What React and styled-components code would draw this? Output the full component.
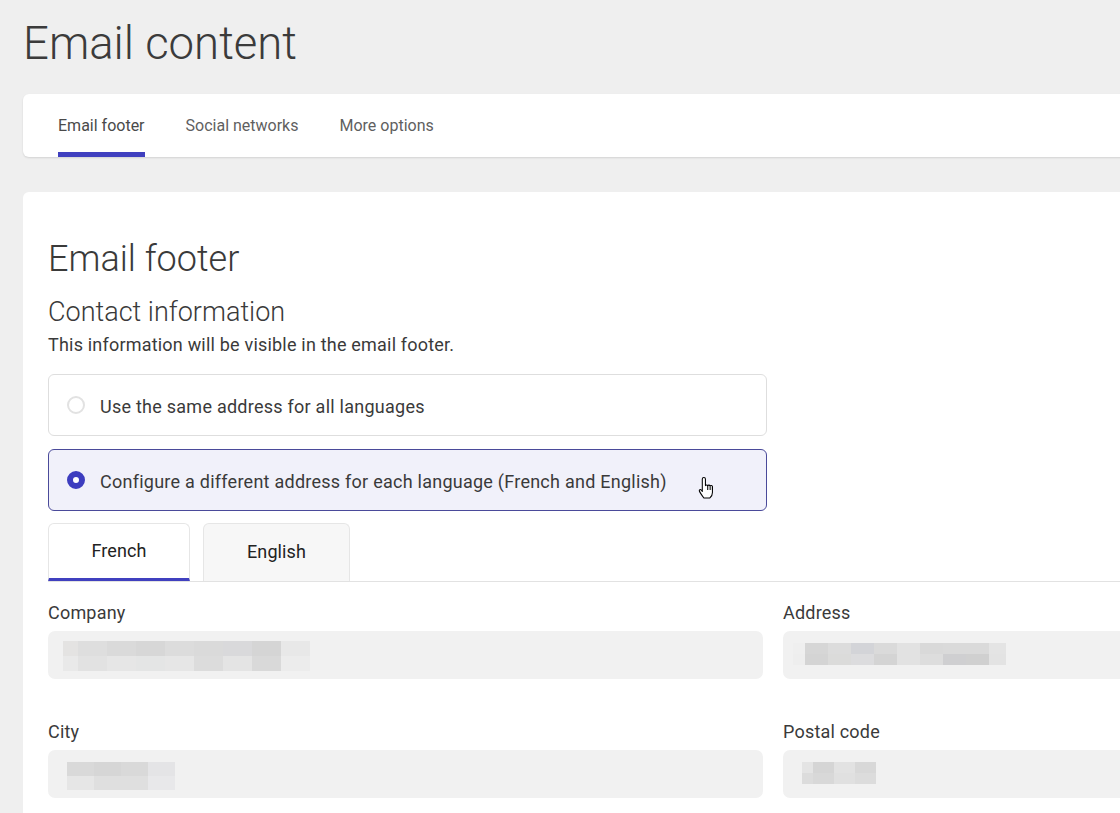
import React, { useState } from "react";
import styled, { createGlobalStyle } from "styled-components";

const GlobalStyle = createGlobalStyle`
  html, body {
    margin: 0;
    padding: 0;
    background: #efefef;
    overflow: hidden;
  }
  body {
    font-family: Roboto, "Liberation Sans", sans-serif;
    color: #333;
  }
  * {
    box-sizing: border-box;
  }
`;

const Page = styled.div`
  width: 1560px;
  padding: 21px 0 0 23px;
`;

const PageTitle = styled.h1`
  margin: 0 0 27px;
  font-size: 45.5px;
  line-height: 1;
  font-weight: 300;
  color: #3b3b3b;
`;

const TabCard = styled.div`
  height: 63px;
  background: #fff;
  border-radius: 6px;
  box-shadow: 0 1px 2px rgba(0, 0, 0, 0.12);
  padding: 0 0 0 35px;
  display: flex;
  gap: 41px;
`;

const TopTab = styled.div`
  display: flex;
  align-items: center;
  padding-top: 5px;
  font-size: 16px;
  color: ${(p) => (p.active ? "#4a4a4a" : "#5f5f5f")};
  border-bottom: 5px solid ${(p) => (p.active ? "#4040bf" : "transparent")};
  cursor: pointer;
`;

const Card = styled.div`
  margin-top: 35px;
  background: #fff;
  border-radius: 6px;
  padding: 49px 25px 40px;
  height: 700px;
`;

const SectionTitle = styled.h2`
  margin: 0 0 22px;
  font-size: 36px;
  line-height: 1;
  font-weight: 300;
  color: #3a3a3a;
`;

const SubTitle = styled.h3`
  margin: 0 0 10px;
  font-size: 27px;
  line-height: 1;
  font-weight: 300;
  color: #3a3a3a;
`;

const Hint = styled.p`
  margin: 0 0 20px;
  font-size: 18px;
  letter-spacing: 0.2px;
  line-height: 1;
  color: #3a3a3a;
`;

const Options = styled.div`
  width: 719px;
  display: flex;
  flex-direction: column;
  gap: 13px;
`;

const Option = styled.label`
  position: relative;
  height: 62px;
  display: flex;
  align-items: center;
  gap: 15px;
  padding: 0 0 0 18px;
  border: 1px solid ${(p) => (p.checked ? "#4a4a9a" : "#dedede")};
  background: ${(p) => (p.checked ? "#f1f1fa" : "#fff")};
  border-radius: 6px;
  font-size: 18px;
  letter-spacing: 0.25px;
  color: #3a3a3a;
  cursor: pointer;
`;

const OptionText = styled.span`
  padding-top: 3px;
`;

const Radio = styled.span`
  width: 18px;
  height: 18px;
  border-radius: 50%;
  border: ${(p) => (p.checked ? "6px solid #3d3dbf" : "2px solid #e2e2e2")};
  background: #fff;
  flex-shrink: 0;
`;

const Cursor = styled.svg`
  position: absolute;
  left: 649px;
  top: 26px;
  width: 18px;
  height: 23px;
`;

const LangTabs = styled.div`
  margin-top: 12px;
  display: flex;
  gap: 13px;
  border-bottom: 1px solid #e2e2e2;
`;

const LangTab = styled.div`
  width: ${(p) => p.w}px;
  height: 58px;
  display: flex;
  align-items: center;
  justify-content: center;
  font-size: 18px;
  letter-spacing: 0.1px;
  color: #222;
  background: ${(p) => (p.active ? "#fff" : "#f7f7f7")};
  border: 1px solid #e6e6e6;
  border-bottom: ${(p) => (p.active ? "3px solid #4040bf" : "none")};
  border-radius: 6px 6px 0 0;
  padding-bottom: ${(p) => (p.active ? "0" : "2px")};
  cursor: pointer;
`;

const FieldGrid = styled.div`
  margin-top: 22px;
  display: grid;
  grid-template-columns: 715px 715px;
  column-gap: 20px;
  row-gap: 44px;
`;

const Field = styled.div`
  display: flex;
  flex-direction: column;
  gap: 9px;
`;

const Label = styled.span`
  font-size: 18px;
  letter-spacing: 0.2px;
  line-height: 1;
  color: #3a3a3a;
`;

const Input = styled.div`
  height: 48px;
  background: #f1f1f1;
  border-radius: 7px;
  padding: ${(p) => p.pad};
  display: flex;
  flex-direction: column;
`;

const PixelRow = styled.div`
  display: flex;
  height: ${(p) => p.h}px;
`;

const Pixel = styled.span`
  display: block;
  width: ${(p) => p.w}px;
  height: 100%;
  background: ${(p) => p.c};
`;

const fields = [
  {
    label: "Company",
    pad: "10px 0 0 15px",
    h: 15,
    widths: [15, 29, 29, 29, 29, 29, 29, 29, 29],
    rows: [
      ["#e4e3e2", "#dedede", "#dadada", "#d7d7d7", "#dcdcdc", "#dadada", "#d9d9db", "#d5d5d5", "#e8e8e8"],
      ["#e9e9e9", "#e2e2e2", "#e6e6e6", "#e4e5e5", "#e6e6e6", "#dcdcdc", "#e4e4e4", "#d9d9d9", "#ececec"],
    ],
  },
  {
    label: "Address",
    pad: "12px 0 0 10px",
    h: 11,
    widths: [12, 23, 23, 23, 23, 23, 23, 23, 23, 17],
    rows: [
      ["#efefef", "#d6d6d6", "#dcdcdc", "#d3d4d8", "#dadada", "#e2e2e2", "#d9d9d9", "#dadada", "#dadada", "#e4e4e4"],
      ["#eeeeee", "#d4d4d4", "#dbdbda", "#dcdcde", "#d4d4d4", "#e2e2e2", "#dddddd", "#cfcfd1", "#d0d0d0", "#e3e3e3"],
    ],
  },
  {
    label: "City",
    pad: "12px 0 0 19px",
    h: 14,
    widths: [27, 27, 27, 27],
    rows: [
      ["#d9d9d9", "#d6d6d6", "#d9d9d9", "#e4e4e6"],
      ["#e6e6e6", "#dfdfdf", "#dfdfdf", "#e8e8ea"],
    ],
  },
  {
    label: "Postal code",
    pad: "12px 0 0 19px",
    h: 11,
    widths: [11, 21, 21, 21],
    rows: [
      ["#e4e4e4", "#d5d5d5", "#e2e2e2", "#d8d8d8"],
      ["#dcdcdc", "#d8d8d8", "#e0e0e0", "#dcdcdc"],
    ],
  },
];

const HandCursor = () => (
  <Cursor viewBox="0 0 17 22">
    <path
      d="M5.5 1.5c.8 0 1.5.6 1.5 1.4v6.3c.3-.7 1.8-.8 2.2.1.4-.8 1.9-.8 2.3.2.5-.7 2-.5 2.2.6v5.6c0 2.2-1.3 4.3-2.4 5.3H5.5C4.6 19.8 1.8 16 1.2 14.4c-.4-1.1.9-1.9 1.8-1l1 1.4V2.9c0-.8.7-1.4 1.5-1.4z"
      fill="#fff"
      stroke="#000"
      strokeWidth="1"
      strokeLinejoin="round"
    />
    <path d="M9.2 9.5v4M11.5 9.8v3.7M13.7 10.4v3.1" stroke="#000" strokeWidth="1" />
  </Cursor>
);

export default function App() {
  const [tab, setTab] = useState(0);
  const [mode, setMode] = useState(1);
  const [lang, setLang] = useState(0);

  return (
    <>
      <GlobalStyle />
      <Page>
        <PageTitle>Email content</PageTitle>
        <TabCard>
          {["Email footer", "Social networks", "More options"].map((t, i) => (
            <TopTab key={t} active={i === tab} onClick={() => setTab(i)}>
              {t}
            </TopTab>
          ))}
        </TabCard>

        <Card>
          <SectionTitle>Email footer</SectionTitle>
          <SubTitle>Contact information</SubTitle>
          <Hint>This information will be visible in the email footer.</Hint>

          <Options>
            <Option checked={mode === 0} onClick={() => setMode(0)}>
              <Radio checked={mode === 0} />
              <OptionText>Use the same address for all languages</OptionText>
            </Option>
            <Option checked={mode === 1} onClick={() => setMode(1)}>
              <Radio checked={mode === 1} />
              <OptionText>
                Configure a different address for each language (French and English)
              </OptionText>
              <HandCursor />
            </Option>
          </Options>

          <LangTabs>
            <LangTab w={142} active={lang === 0} onClick={() => setLang(0)}>
              French
            </LangTab>
            <LangTab w={147} active={lang === 1} onClick={() => setLang(1)}>
              English
            </LangTab>
          </LangTabs>

          <FieldGrid>
            {fields.map((f) => (
              <Field key={f.label}>
                <Label>{f.label}</Label>
                <Input pad={f.pad}>
                  {f.rows.map((row, r) => (
                    <PixelRow key={r} h={f.h}>
                      {row.map((c, k) => (
                        <Pixel key={k} w={f.widths[k]} c={c} />
                      ))}
                    </PixelRow>
                  ))}
                </Input>
              </Field>
            ))}
          </FieldGrid>
        </Card>
      </Page>
    </>
  );
}
